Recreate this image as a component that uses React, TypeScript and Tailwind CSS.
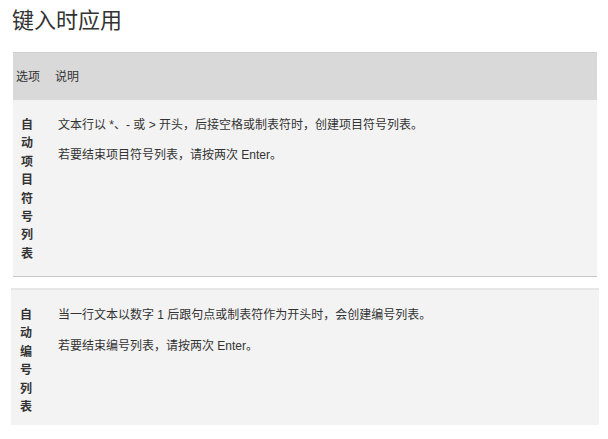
const FONT = { fontFamily: '"Liberation Sans", "Noto Sans CJK SC", sans-serif' }

const ROWS = [
  {
    option: '自动项目符号列表',
    lines: [
      '文本行以 *、- 或 > 开头，后接空格或制表符时，创建项目符号列表。',
      '若要结束项目符号列表，请按两次 Enter。',
    ],
  },
  {
    option: '自动编号列表',
    lines: [
      '当一行文本以数字 1 后跟句点或制表符作为开头时，会创建编号列表。',
      '若要结束编号列表，请按两次 Enter。',
    ],
  },
]

function OptionCell({ text }: { text: string }) {
  return (
    <div className="w-[45px] shrink-0 pl-[8px] pr-[4px]">
      {text.split('').map((ch, i) => (
        <div key={i} className="h-[18.4px] text-[12px] font-bold leading-[18.4px] text-[#333]">
          {ch}
        </div>
      ))}
    </div>
  )
}

export default function App() {
  return (
    <div className="h-[439px] w-[608px] overflow-hidden bg-white text-[#333]" style={FONT}>
      {/* 标题 */}
      <h1 className="ml-[12px] pt-[7px] text-[22px] leading-[28px] font-normal text-[#333]">键入时应用</h1>

      {/* 表头 + 第一行 */}
      <div className="mx-[13px] mt-[17px] w-[584px]">
        <div className="flex h-[48px] items-center border-t border-[#d0d0d0] bg-[#d9d9d9] text-[12px]">
          <div className="w-[42px] shrink-0 pl-[3px]">选项</div>
          <div>说明</div>
        </div>
        <div className="flex h-[177px] border-b border-[#c8c8c8] bg-[#f3f3f3] pt-[16px]">
          <OptionCell text={ROWS[0].option} />
          <div className="flex flex-col gap-[11.6px] text-[12px] leading-[18.4px]">
            {ROWS[0].lines.map((l) => (
              <p key={l}>{l}</p>
            ))}
          </div>
        </div>
      </div>

      {/* 第二行 */}
      <div className="mx-[11px] mt-[11px] flex h-[137px] w-[588px] border-t-2 border-[#e6e6e6] bg-[#f3f3f3] pt-[16px]">
        <div className="w-[47px] shrink-0 pl-[9px] pr-[4px]">
          {ROWS[1].option.split('').map((ch, i) => (
            <div key={i} className="h-[18.4px] text-[12px] font-bold leading-[18.4px] text-[#333]">
              {ch}
            </div>
          ))}
        </div>
        <div className="flex flex-col gap-[12.5px] text-[12px] leading-[18.4px]">
          {ROWS[1].lines.map((l) => (
            <p key={l}>{l}</p>
          ))}
        </div>
      </div>
    </div>
  )
}
